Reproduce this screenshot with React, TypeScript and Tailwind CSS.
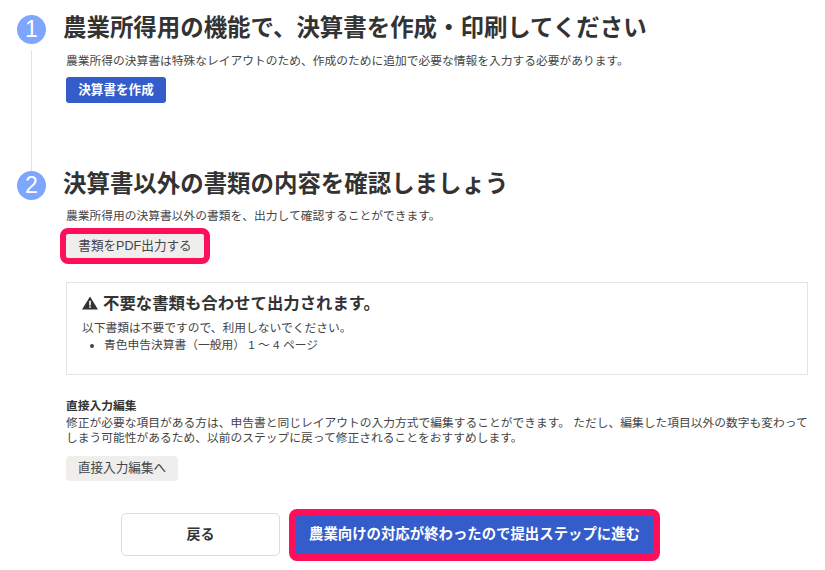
const font = { fontFamily: '"Liberation Sans","Noto Sans CJK JP",sans-serif' };

function Step({ n, line, title, children }: { n: number; line?: boolean; title: string; children: React.ReactNode }) {
  return (
    <div className="flex">
      <div className="flex w-[47px] shrink-0 flex-col items-start">
        <div className="flex h-[29px] w-[29px] items-center justify-center rounded-full bg-[#7ea6ff] text-[23px] leading-none font-normal text-white">{n}</div>
        {line && <div className="mt-[6px] ml-[14px] h-[121px] w-px bg-[#e2e2e2]" />}
      </div>
      <div className="min-w-0 flex-1">
        <h2 className="-ml-[1px] h-[29px] text-[23.45px] leading-[26px] font-bold whitespace-nowrap text-[#333]">{title}</h2>
        {children}
      </div>
    </div>
  );
}

export default function App() {
  return (
    <div style={font} className="h-[570px] w-[825px] overflow-hidden bg-white pt-[15px] pl-[17px] text-[#333]">
      <Step n={1} line title="農業所得用の機能で、決算書を作成・印刷してください">
        <p className="mt-[9px] ml-[2px] text-[11.75px] leading-[16px] whitespace-nowrap text-[#444]">農業所得の決算書は特殊なレイアウトのため、作成のために追加で必要な情報を入力する必要があります。</p>
        <button className="mt-[8px] ml-[2px] block h-[26px] w-[100px] rounded-[3px] bg-[#345ccb] text-[12.6px] font-bold text-white">決算書を作成</button>
      </Step>
      <Step n={2} title="決算書以外の書類の内容を確認しましょう">
        <p className="mt-[8px] ml-[2px] text-[11.75px] leading-[16px] whitespace-nowrap text-[#444]">農業所得用の決算書以外の書類を、出力して確認することができます。</p>
        <button className="mt-[4px] -ml-[4px] block h-[36px] w-[150px] rounded-[8px] border-[6px] border-[#ff0f5a] bg-[#efeeec] text-[12.6px] leading-none text-[#444]">書類をPDF出力する</button>
        <div className="mt-[18px] ml-[2px] h-[93px] w-[742px] border border-[#e4e4e4] px-[15px] pt-[9px]">
          <div className="flex items-center gap-[5px] text-[16.4px] leading-[22px] font-bold whitespace-nowrap text-[#333]">
            <svg width="16" height="14" viewBox="0 0 16 14" className="shrink-0"><path fill="#333" d="M8 .5 16 13.5H0Z" /><path fill="#fff" d="M7.2 4.8h1.6v4.6H7.2zM7.2 10.3h1.6v1.5H7.2z" /></svg>
            <span>不要な書類も合わせて出力されます。</span>
          </div>
          <p className="mt-[5px] text-[11.75px] leading-[17px] text-[#444]">以下書類は不要ですので、利用しないでください。</p>
          <ul className="list-disc pl-[22px] text-[11.75px] leading-[17px] text-[#444]"><li>青色申告決算書（一般用） 1 ～ 4 ページ</li></ul>
        </div>
        <div className="mt-[22px] ml-[2px] w-[745px] text-[11.75px] text-[#444]">
          <div className="leading-[18px] font-bold text-[#333]">直接入力編集</div>
          <p className="leading-[15px]">修正が必要な項目がある方は、申告書と同じレイアウトの入力方式で編集することができます。 ただし、編集した項目以外の数字も変わってしまう可能性があるため、以前のステップに戻って修正されることをおすすめします。</p>
        </div>
        <button className="mt-[11px] ml-[2px] block h-[25px] w-[112px] rounded-[4px] bg-[#efeeec] text-[12.6px] leading-none text-[#444]">直接入力編集へ</button>
        <div className="mt-[28px] ml-[57px] flex items-start gap-[9px]">
          <button className="mt-[4px] h-[43px] w-[159px] rounded-[5px] border border-[#ddd] bg-white text-[14px] font-bold text-[#333]">戻る</button>
          <button className="h-[52px] w-[371px] rounded-[8px] border-[7px] border-[#ff0f5a] bg-[#345ccb] text-[14.4px] font-bold whitespace-nowrap text-white">農業向けの対応が終わったので提出ステップに進む</button>
        </div>
      </Step>
    </div>
  );
}
